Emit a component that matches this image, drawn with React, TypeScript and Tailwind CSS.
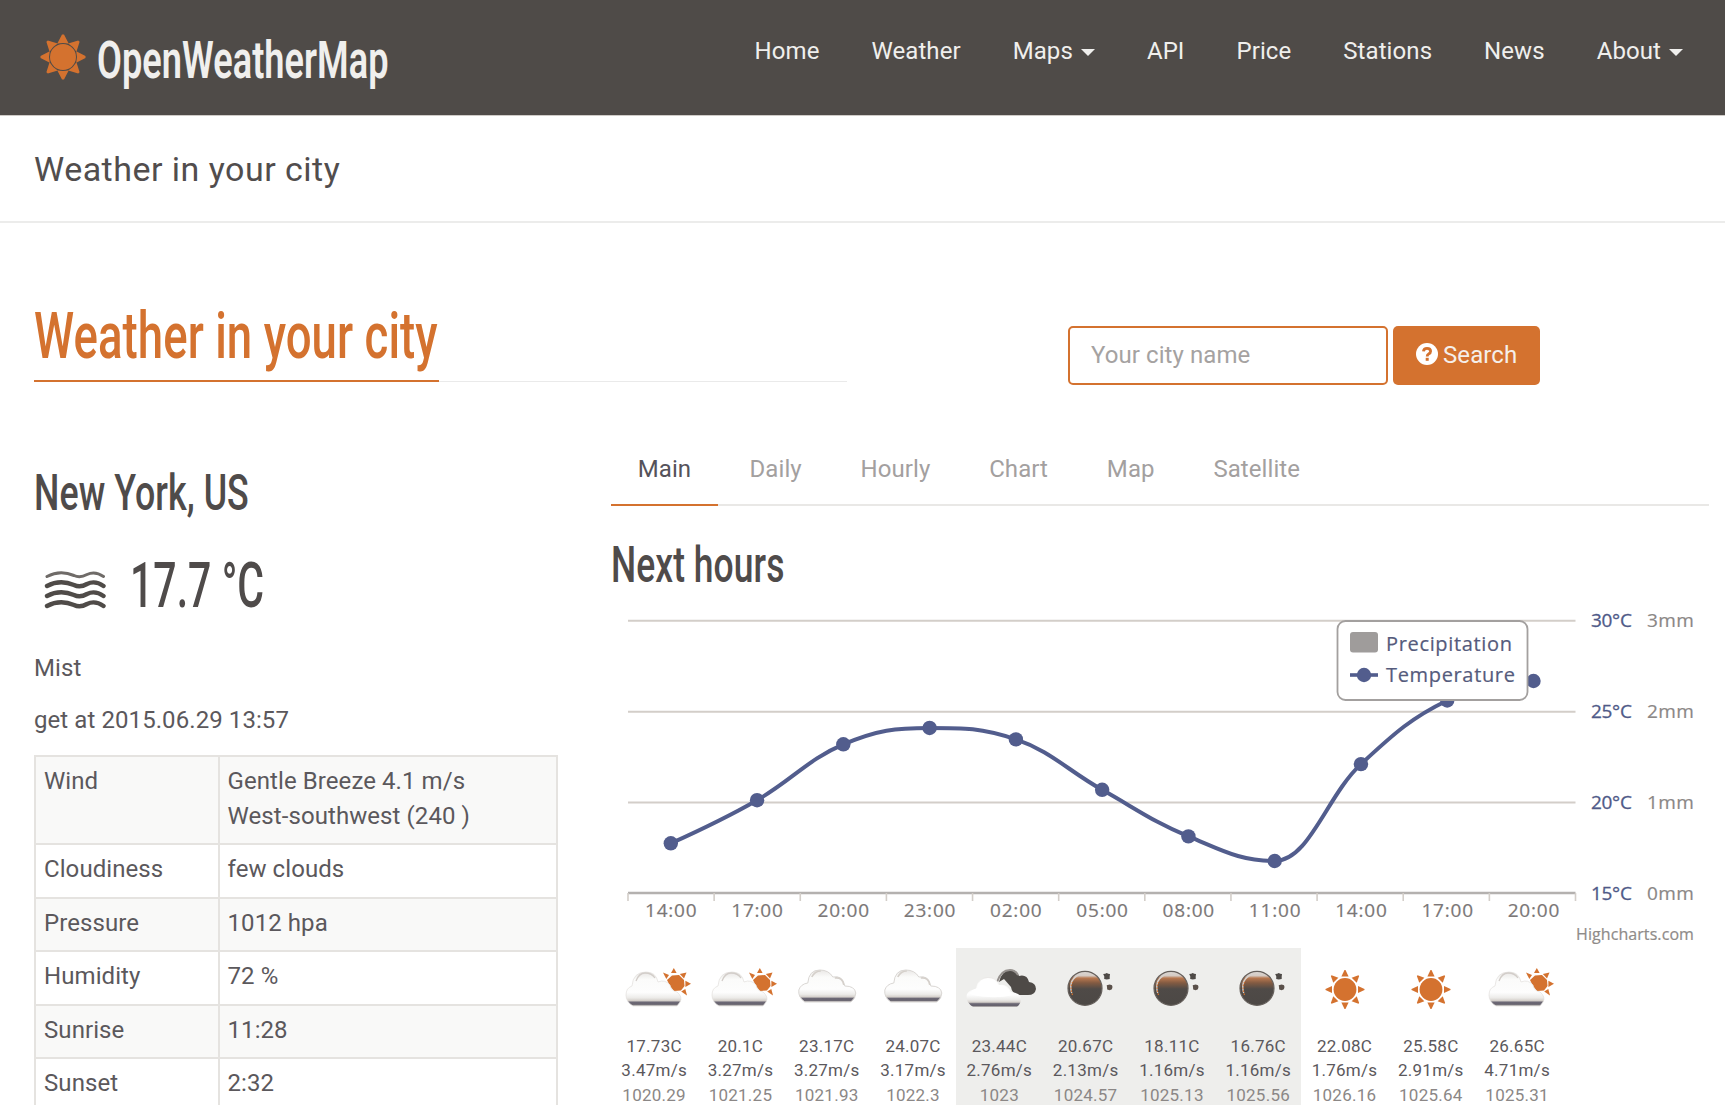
import React from "react";

const HOURS = ["14:00", "17:00", "20:00", "23:00", "02:00", "05:00", "08:00", "11:00", "14:00", "17:00", "20:00"];
const TEMPS = [17.73, 20.1, 23.17, 24.07, 23.44, 20.67, 18.11, 16.76, 22.08, 25.58, 26.65];

type IconKind = "sunCloud" | "cloud" | "darkCloud" | "moon" | "sun";

const FORECAST: { icon: IconKind; temp: string; wind: string; pressure: string; night?: boolean }[] = [
  { icon: "sunCloud", temp: "17.73C", wind: "3.47m/s", pressure: "1020.29" },
  { icon: "sunCloud", temp: "20.1C", wind: "3.27m/s", pressure: "1021.25" },
  { icon: "cloud", temp: "23.17C", wind: "3.27m/s", pressure: "1021.93" },
  { icon: "cloud", temp: "24.07C", wind: "3.17m/s", pressure: "1022.3" },
  { icon: "darkCloud", temp: "23.44C", wind: "2.76m/s", pressure: "1023", night: true },
  { icon: "moon", temp: "20.67C", wind: "2.13m/s", pressure: "1024.57", night: true },
  { icon: "moon", temp: "18.11C", wind: "1.16m/s", pressure: "1025.13", night: true },
  { icon: "moon", temp: "16.76C", wind: "1.16m/s", pressure: "1025.56", night: true },
  { icon: "sun", temp: "22.08C", wind: "1.76m/s", pressure: "1026.16" },
  { icon: "sun", temp: "25.58C", wind: "2.91m/s", pressure: "1025.64" },
  { icon: "sunCloud", temp: "26.65C", wind: "4.71m/s", pressure: "1025.31" },
];

const ANGLES = [0, 45, 90, 135, 180, 225, 270, 315];

function Caret() {
  return <span className="ml-2 inline-block border-x-[7px] border-t-[7px] border-x-transparent border-t-[#f0efed] align-middle" />;
}

function LogoSun() {
  return (
    <svg className="h-[50px] w-[50px]" viewBox="-25 -25 50 50">
      <circle r="13" fill="#d4722f" />
      {ANGLES.map((a) => (
        <path key={a} d="M-5.8 -13.2 Q0 -14.8 5.8 -13.2 L1 -22.5 L-1 -22.5Z" fill="#d4722f" transform={`rotate(${a})`} />
      ))}
    </svg>
  );
}

function Defs() {
  return (
    <svg className="absolute h-0 w-0">
      <defs>
        <linearGradient id="cloudFill" x1="0" y1="0" x2="0" y2="1">
          <stop offset="0" stopColor="#e9e7e5" />
          <stop offset="0.22" stopColor="#fbfbfa" />
          <stop offset="0.6" stopColor="#fdfdfd" />
          <stop offset="0.76" stopColor="#ecebe9" />
          <stop offset="0.84" stopColor="#d5d0cb" />
          <stop offset="0.89" stopColor="#6c6875" />
          <stop offset="0.95" stopColor="#67636e" />
          <stop offset="1" stopColor="#c6c2bf" />
        </linearGradient>
        <linearGradient id="moonFill" x1="0" y1="0" x2="0" y2="1">
          <stop offset="0" stopColor="#dcd8d4" />
          <stop offset="0.13" stopColor="#d5cbc4" />
          <stop offset="0.2" stopColor="#b87850" />
          <stop offset="0.34" stopColor="#835b42" />
          <stop offset="0.52" stopColor="#4f4a47" />
          <stop offset="1" stopColor="#4c4845" />
        </linearGradient>
      </defs>
    </svg>
  );
}

function WeatherIcon({ kind }: { kind: IconKind }) {
  return (
    <svg className="h-[50px] w-[76px]" viewBox="0 0 76 50">
      {kind === "sunCloud" && (
        <g transform="translate(4 0)">
          <g transform="translate(56 19)" fill="#d4722f">
            <path d="M-9 -3 L-4 -7.5 L3 -8 L8 -3 L8.5 3 L5 7.5 L-2 8 L-6 3Z" />
            <path d="M-5 -10 L.6 -10 L-2.2 -15Z" />
            <path d="M-13 -10.5 L-7 -8 L-9.7 -4Z" />
            <path d="M10.5 -10.5 L3.8 -9 L8 -4.6Z" />
            <path d="M15 .8 L9.4 -2.2 L9.4 4Z" />
            <path d="M11 12.5 L5.2 8.5 L9.3 6Z" />
          </g>
          <path d="M13 42 Q6 38 6 31 Q6 24 12 22 Q13 8 26 8 Q36 8 38 18 Q45 15 50 21 Q51 27 57 28 Q63 33 60 38 L57 42Z" fill="url(#cloudFill)" stroke="#e3e0dd" strokeWidth=".7" />
          <path d="M16 17 Q19 9 25 9 Q32 9 35 14" fill="none" stroke="#d2cdc9" strokeWidth="1.3" />
        </g>
      )}
      {kind === "cloud" && (
        <g transform="translate(3.8 0)">
          <path d="M12 38 Q5 33 6 26 Q8 20 15 19 Q16 6 27 6 Q36 6 40 13 Q50 11 52 22 Q62 22 63 29 Q63 34 58 38Z" fill="url(#cloudFill)" stroke="#dad7d4" strokeWidth="1" />
          <path d="M19 13 Q22 7 28 7 M42 14 Q50 13 51 21" fill="none" stroke="#d5d0cb" strokeWidth="1.6" />
        </g>
      )}
      {kind === "darkCloud" && (
        <g transform="translate(4 0)">
          <path d="M34 18 Q37 6 46 6 Q52 6 54 12 Q62 10 64 18 Q71 19 71 25 Q70 31 63 31 L54 31 Q47 30 46 23 L39 15Z" fill="#4e4a47" />
          <path d="M32 18 Q36 6 45 6 Q50 6 53 11" fill="none" stroke="#96918e" strokeWidth="2" />
          <path d="M8 43 Q0 38 2 30 Q4 26 11 25 Q13 13 23 13 Q32 13 34 21 Q42 19 46 28 Q55 29 56 34 Q56 40 52 43Z" fill="url(#cloudFill)" />
          <path d="M12 24 Q14 14 23 14 Q31 14 33 21 Q42 20 45 29 L48 31 Q28 36 4 30 Q6 26 12 24Z" fill="#fff" />
        </g>
      )}
      {kind === "moon" && (
        <g transform="translate(3.7 0)">
          <circle cx="33.3" cy="24.3" r="17" fill="url(#moonFill)" stroke="#66605c" strokeWidth="1.2" />
          <path d="M20 29 Q16 15 29 10" fill="none" stroke="#d6d1cd" strokeWidth="1.4" />
          <path d="M20.8 31 Q18 23 21 18" fill="none" stroke="#d4722f" strokeWidth="1.2" strokeDasharray="1.5 1.5" />
          <path d="M51.5 10 L53.5 9.8 L55 9 L56.5 9.8 L58.3 10 L58 12.5 L58 15 L55 15.4 L52.5 15 L52.6 12.5Z" fill="#4e4a47" />
          <path d="M55 21.3 L58 20.4 L60.3 21.3 L60.8 23 L60.2 25.3 L58 26.2 L55.5 25.5 L55.3 23Z" fill="#5a504a" />
        </g>
      )}
      {kind === "sun" && (
        <g transform="translate(38 25.5)" fill="#d4722f">
          <circle r="11.4" />
          {ANGLES.map((a) => (
            <path key={a} d="M-3.6 -13 L3.6 -13 L0.5 -19.5 L-0.5 -19.5Z" transform={`rotate(${a})`} />
          ))}
        </g>
      )}
    </svg>
  );
}

/* Chart geometry, relative to the chart's own box */
const LEFT = 17;
const RIGHT = 964.5;
const STEP = (RIGHT - LEFT) / 11;
const BASE = 294;
const PER_DEGREE = 18.2;
const POINTS = TEMPS.map((t, i) => ({ x: 59.8 + 86.27 * i, y: BASE - (t - 15) * PER_DEGREE }));

/* Smooth curve that never overshoots its neighbouring points */
function splinePath(pts: { x: number; y: number }[]) {
  let d = `M${pts[0].x} ${pts[0].y}`;
  let prevRight = pts[0];
  for (let i = 1; i < pts.length; i++) {
    const p = pts[i];
    const last = pts[i - 1];
    const next = pts[i + 1];
    let left = p;
    let right = p;
    if (next) {
      const lx = (1.5 * p.x + last.x) / 2.5;
      let ly = (1.5 * p.y + last.y) / 2.5;
      const rx = (1.5 * p.x + next.x) / 2.5;
      let ry = (1.5 * p.y + next.y) / 2.5;
      const corr = ((ry - ly) * (rx - p.x)) / (rx - lx) + p.y - ry;
      ly += corr;
      ry += corr;
      const hiL = Math.max(last.y, p.y);
      const loL = Math.min(last.y, p.y);
      if (ly > hiL) { ly = hiL; ry = 2 * p.y - ly; } else if (ly < loL) { ly = loL; ry = 2 * p.y - ly; }
      const hiR = Math.max(next.y, p.y);
      const loR = Math.min(next.y, p.y);
      if (ry > hiR) { ry = hiR; ly = 2 * p.y - ry; } else if (ry < loR) { ry = loR; ly = 2 * p.y - ry; }
      left = { x: lx, y: ly };
      right = { x: rx, y: ry };
    }
    d += ` C${prevRight.x} ${prevRight.y} ${left.x} ${left.y} ${p.x} ${p.y}`;
    prevRight = right;
  }
  return d;
}

function Chart() {
  return (
    <svg className="block h-[349px] w-[1098px] font-['Open_Sans',sans-serif]" viewBox="0 0 1098 349">
      {[21.7, 112.8, 203.4].map((y) => (
        <line key={y} x1={LEFT} x2={RIGHT} y1={y} y2={y} stroke="#d3cec9" strokeWidth="2" />
      ))}
      <line x1={LEFT} x2={RIGHT} y1="294" y2="294" stroke="#b4b1af" strokeWidth="2.4" />
      {Array.from({ length: 12 }, (_, i) => (
        <line key={i} x1={LEFT + STEP * i} x2={LEFT + STEP * i} y1={294} y2={302} stroke="#d3cec9" strokeWidth="1.6" />
      ))}
      <path d={splinePath(POINTS)} fill="none" stroke="#525d8d" strokeWidth="4" />
      {POINTS.map((p, i) => (
        <circle key={i} cx={p.x} cy={p.y} r="7.2" fill="#525d8d" />
      ))}
      {HOURS.map((h, i) => (
        <text key={i} x={POINTS[i].x + 0.4} y="318" textAnchor="middle" fontSize="19" letterSpacing=".8" fill="#7b7777" stroke="#7b7777" strokeWidth=".2">{h}</text>
      ))}
      {[30, 25, 20, 15].map((t, i) => (
        <g key={t} fontSize="19">
          <text x="980" y={27.5 + i * 91.1} textLength="41" fill="#4f5a88" stroke="#4f5a88" strokeWidth=".3">{t}°C</text>
          <text x="1036" y={27.5 + i * 91.1} textLength="47" fill="#8b8786" stroke="#8b8786" strokeWidth=".2">{3 - i}mm</text>
        </g>
      ))}
      <text x="965" y="341" fontSize="16" textLength="118" fill="#8f8b89" stroke="#8f8b89" strokeWidth=".2">Highcharts.com</text>
      <rect x="726.5" y="22" width="190" height="79" rx="8" fill="#fff" stroke="#a3a09f" strokeWidth="1.8" />
      <rect x="739" y="33" width="28" height="20.5" rx="3" fill="#9f9c9b" />
      <line x1="739" x2="767" y1="76" y2="76" stroke="#525d8d" strokeWidth="3.6" />
      <circle cx="753" cy="76" r="7.2" fill="#525d8d" />
      <text x="775" y="52" fontSize="20" textLength="126" fill="#555b7c" stroke="#555b7c" strokeWidth=".2">Precipitation</text>
      <text x="775" y="83" fontSize="20" textLength="129" fill="#555b7c" stroke="#555b7c" strokeWidth=".2">Temperature</text>
    </svg>
  );
}

const NAV: [string, boolean?][] = [["Home"], ["Weather"], ["Maps", true], ["API"], ["Price"], ["Stations"], ["News"], ["About", true]];

const ROWS: [string, React.ReactNode][] = [
  ["Wind", <>Gentle Breeze 4.1 m/s<br />West-southwest (240 )</>],
  ["Cloudiness", "few clouds"],
  ["Pressure", "1012 hpa"],
  ["Humidity", "72 %"],
  ["Sunrise", "11:28"],
  ["Sunset", "2:32"],
];

export default function App() {
  return (
    <div className="h-[1105px] w-[1725px] overflow-hidden bg-white font-['Roboto',sans-serif] text-2xl tracking-[.08px] text-[#5b585c]">
      <Defs />
      <header className="flex h-[116px] items-start justify-between border-b border-[#cfcbc7] bg-[#4f4b48] pr-[42px] pl-[38px] text-[#f0efed]">
        <div className="flex">
          <div className="pt-[32px]"><LogoSun /></div>
          <div className="ml-[9px] h-[51px] w-[292px] pt-[35px]">
            <div className="w-max origin-left scale-x-[.708] text-[51px] leading-[51px] font-semibold whitespace-nowrap">OpenWeatherMap</div>
          </div>
        </div>
        <nav className="flex gap-[52px] pt-[34px] leading-[34px] whitespace-nowrap">
          {NAV.map(([label, caret]) => (
            <a key={label}>{label}{caret && <Caret />}</a>
          ))}
        </nav>
      </header>

      <div className="h-[107px] border-b-2 border-[#ececeb] pt-[32px] pl-[34px] text-[34px] leading-[42px] text-[#514d4d]">
        <span className="tracking-[.48px]">Weather in your city</span>
      </div>

      <section className="flex h-[159px] pt-[81px] pl-[34px]">
        <h1 className="h-[78px] w-[813px] border-b border-[#eaeaea]">
          <div className="h-[78px] w-[405px] border-b-2 border-[#d4722f] pt-px">
            <div className="w-max origin-left scale-x-[.712] text-[64px] leading-[64px] font-medium whitespace-nowrap text-[#d4722f]">Weather in your city</div>
          </div>
        </h1>
        <form className="mt-[22px] ml-[221px] flex h-[59px] gap-[5px]">
          <div className="w-[320px] rounded-[5px] border-2 border-[#d4722f] pl-[21px] leading-[54px] text-[#a5a2a1]">Your city name</div>
          <button type="button" className="flex w-[147px] items-center rounded-[5px] bg-[#d4722f] pl-[23px] text-[#f5efea]">
            <svg className="mt-[-3px] h-[22px] w-[22px]" viewBox="0 0 22 22">
              <circle cx="11" cy="11" r="11" fill="#fff" />
              <path d="M7.4 8.4 Q7.8 5.3 11 5.3 Q14.6 5.3 14.6 8.2 Q14.6 10 12.6 11 Q11.2 11.7 11.2 13.4" fill="none" stroke="#d4722f" strokeWidth="2.8" />
              <rect x="9.7" y="14.8" width="3" height="3" fill="#d4722f" />
            </svg>
            <span className="mt-[-2px] ml-[5px] leading-[34px]">Search</span>
          </button>
        </form>
      </section>

      <main className="flex pl-[34px]">
        <aside className="w-[577px] shrink-0 pt-[85px]">
          <h2 className="h-[87px]">
            <div className="w-max origin-left scale-x-[.708] text-[50.5px] leading-[51px] font-medium whitespace-nowrap text-[#4f4b4a]">New York, US</div>
          </h2>
          <div className="flex h-[97px]">
            <svg className="mt-[14px] ml-[10px] h-[44px] w-[62px]" viewBox="0 0 62 44">
              {[6.5, 16, 26, 36].map((y, i) => (
                <path key={y} d={`M3 ${y + 2} Q16 ${y - 5} 30 ${y + 1} Q36 ${y + 4} 43 ${y} Q51 ${y - 4} 59.5 ${y + 2}`} fill="none" stroke={i ? "#4f4b48" : "#6f6b68"} strokeWidth={i ? 4.4 : 3} strokeLinecap="round" />
              ))}
            </svg>
            <div className="ml-[24px] w-max origin-left scale-x-[.65] text-[63px] leading-[63px] font-medium whitespace-nowrap text-[#4f4b4a]">17.7 °C</div>
          </div>
          <p className="h-[52px] leading-[34px]">Mist</p>
          <p className="h-[52px] leading-[34px]">get at 2015.06.29 13:57</p>
          <table className="w-[524px] table-fixed border-collapse border-2 border-[#e5e3e0] leading-[34.5px]">
            <colgroup><col className="w-[184px]" /><col /></colgroup>
            <tbody>
              {ROWS.map(([name, value]) => (
                <tr key={name} className="odd:bg-[#f9f9f8]">
                  <td className="border-2 border-[#e5e3e0] px-[8px] pt-[7px] pb-[10px] align-top">{name}</td>
                  <td className="border-2 border-[#e5e3e0] px-[7.5px] pt-[7px] pb-[10px] align-top">{value}</td>
                </tr>
              ))}
            </tbody>
          </table>
        </aside>

        <div className="w-[1098px] shrink-0">
          <div className="mt-[70px] flex h-[54px] border-b-2 border-[#e9e8e6] leading-[34px] whitespace-nowrap text-[#a3a09f]">
            <div className="h-[54px] w-[107px] border-b-2 border-[#d4722f] text-center text-[#55525a]">Main</div>
            <div className="ml-[31.5px] flex gap-[58.8px]">
              {["Daily", "Hourly", "Chart", "Map", "Satellite"].map((t) => <div key={t}>{t}</div>)}
            </div>
          </div>
          <h2 className="h-[93px] pt-[33px]">
            <div className="w-max origin-left scale-x-[.702] text-[50.5px] leading-[51px] font-medium whitespace-nowrap text-[#4f4b4a]">Next hours</div>
          </h2>
          <Chart />
          <div className="flex">
            {FORECAST.map((f, i) => (
              <div key={i} className={`flex h-[157px] w-[86.3px] shrink-0 flex-col items-center pt-[16px] text-[17px] leading-[24.3px] tracking-[.25px] ${f.night ? "bg-[#eeeeec]" : ""}`}>
                <WeatherIcon kind={f.icon} />
                <div className="mt-[20px]">{f.temp}</div>
                <div>{f.wind}</div>
                <div className="mt-[3px] leading-[18px] text-[#8b8786]">{f.pressure}</div>
              </div>
            ))}
          </div>
        </div>
      </main>
    </div>
  );
}
